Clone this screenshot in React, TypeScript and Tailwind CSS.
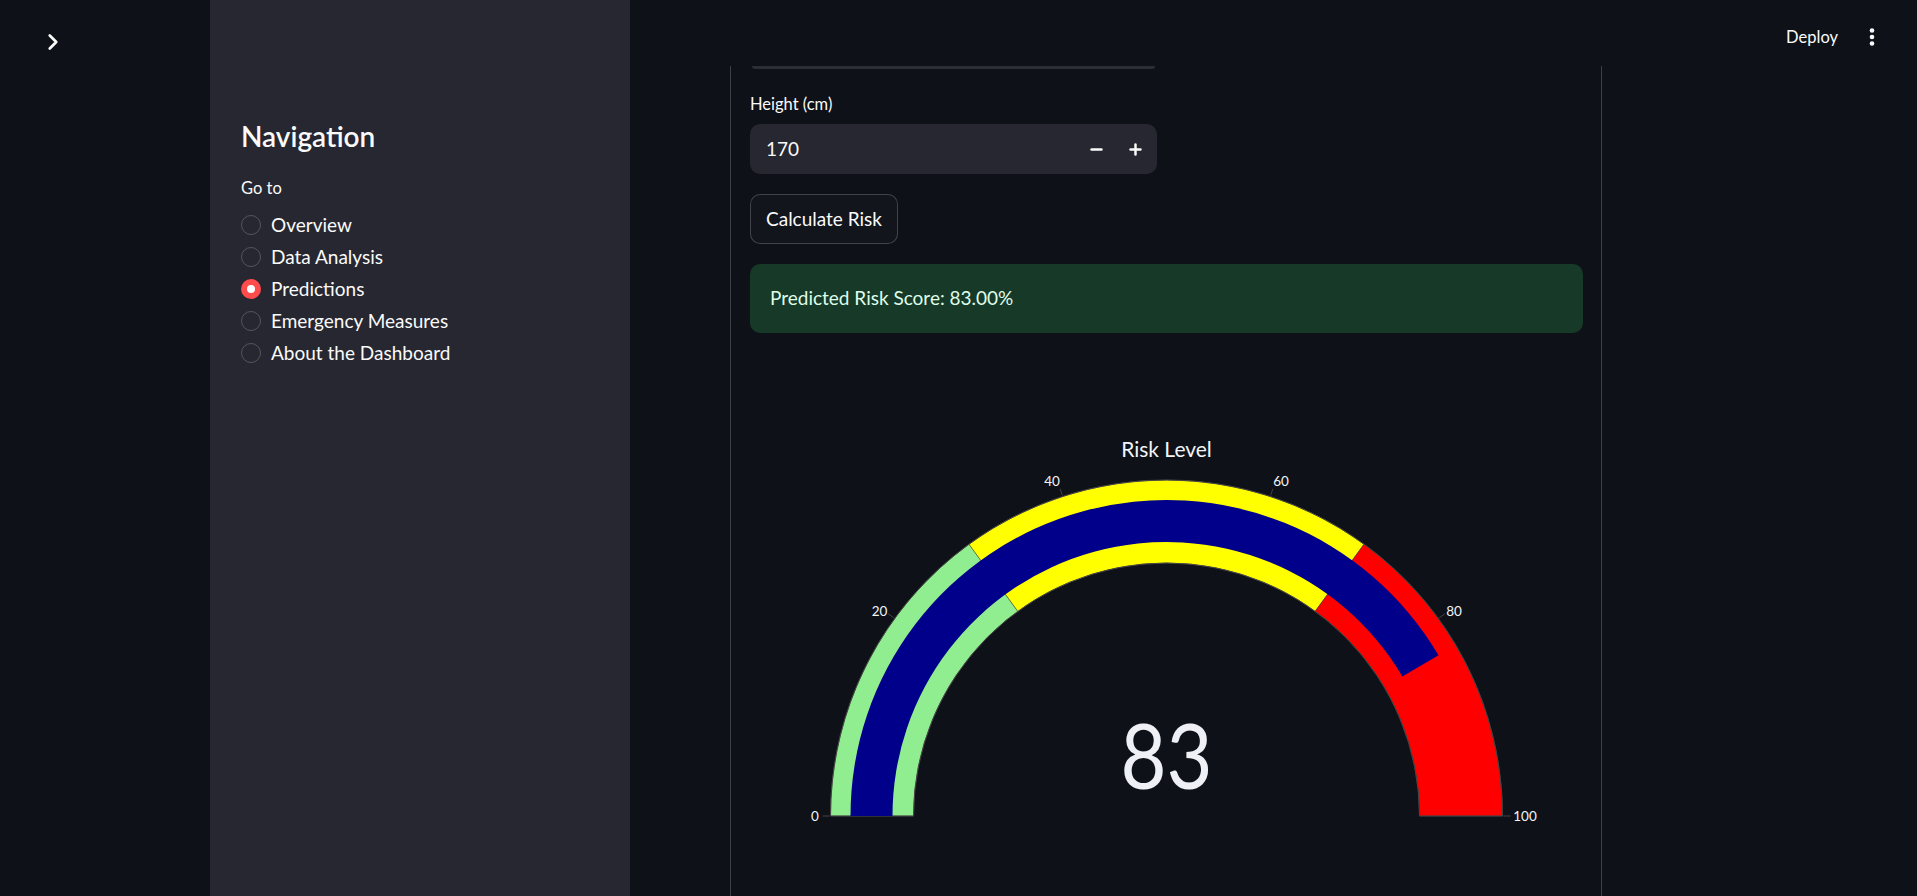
import React from "react";
import { ChevronRight, Minus, Plus } from "lucide-react";

const cx = 416.5;
const cy = 456;

function pt(r: number, deg: number): [number, number] {
  const a = (deg * Math.PI) / 180;
  return [cx + r * Math.cos(a), cy - r * Math.sin(a)];
}

function sector(r0: number, r1: number, a1: number, a2: number): string {
  const [x1, y1] = pt(r1, a1);
  const [x2, y2] = pt(r1, a2);
  const [x3, y3] = pt(r0, a2);
  const [x4, y4] = pt(r0, a1);
  return `M${x1} ${y1} A${r1} ${r1} 0 0 1 ${x2} ${y2} L${x3} ${y3} A${r0} ${r0} 0 0 0 ${x4} ${y4} Z`;
}

const v2a = (v: number) => 180 - v * 1.8;

const tickLabels: { v: number; x: number; y: number }[] = [
  { v: 0, x: 65, y: 456 },
  { v: 20, x: 129.5, y: 250.5 },
  { v: 40, x: 302, y: 120.5 },
  { v: 60, x: 531, y: 120.5 },
  { v: 80, x: 704, y: 250.5 },
  { v: 100, x: 775, y: 456 },
];

function Gauge() {
  return (
    <svg width={833} height={536} viewBox="0 0 833 536" className="block">
      <text
        x={cx}
        y={96.7}
        textAnchor="middle"
        fontSize={21}
        fill="#f2f5fa"
        fontFamily="Lato, sans-serif"
      >
        Risk Level
      </text>
      <path d={sector(253, 336, 180, v2a(30))} fill="#90ee90" stroke="#444" strokeWidth={0.5} />
      <path d={sector(253, 336, v2a(30), v2a(70))} fill="#ffff00" stroke="#444" strokeWidth={0.5} />
      <path d={sector(253, 336, v2a(70), 0)} fill="#ff0000" stroke="#444" strokeWidth={0.5} />
      <path d={sector(253, 336, 180, 0)} fill="none" stroke="#444" strokeWidth={1} />
      <path d={sector(274, 316, 180, v2a(83))} fill="#00008b" />
      {tickLabels.map((t) => {
        const [x1, y1] = pt(337, v2a(t.v));
        const [x2, y2] = pt(344, v2a(t.v));
        return (
          <g key={t.v}>
            <line x1={x1} y1={y1} x2={x2} y2={y2} stroke="#444" strokeWidth={1} />
            <text
              x={t.x}
              y={t.y}
              textAnchor="middle"
              dominantBaseline="central"
              fontSize={13.5}
              fill="#f2f5fa"
              fontFamily="Lato, sans-serif"
            >
              {t.v}
            </text>
          </g>
        );
      })}
      <text
        x={cx}
        y={429}
        textAnchor="middle"
        fontSize={92}
        fill="#eef0f6"
        fontFamily="Lato, sans-serif"
        textLength={92}
        lengthAdjust="spacingAndGlyphs"
      >
        83
      </text>
    </svg>
  );
}

function Radio({ label, checked }: { label: string; checked?: boolean }) {
  return (
    <div className="flex h-[32px] items-center">
      {checked ? (
        <div className="flex h-[20px] w-[20px] items-center justify-center rounded-full bg-[#ff4b4b]">
          <div className="h-[8px] w-[8px] rounded-full bg-white" />
        </div>
      ) : (
        <div className="h-[20px] w-[20px] rounded-full border border-[#54565e]" />
      )}
      <span className="ml-[10px] text-[19px] text-[#fafafa]">{label}</span>
    </div>
  );
}

export default function App() {
  return (
    <div className="flex h-[896px] w-[1917px] overflow-hidden bg-[#0e1117] font-['Lato',sans-serif] text-[#fafafa]">
      {/* left strip */}
      <div className="w-[210px] shrink-0 pl-[40px] pt-[29px]">
        <ChevronRight size={26} strokeWidth={2.5} color="#fafafa" />
      </div>

      {/* sidebar */}
      <div className="w-[420px] shrink-0 bg-[#262730] pl-[31px] pt-[118px]">
        <h2 className="h-[36px] text-[28px] font-semibold leading-[36px]">Navigation</h2>
        <div className="mt-[23px] h-[22px] text-[16.5px] leading-[22px]">Go to</div>
        <div className="mt-[10px] flex flex-col">
          <Radio label="Overview" />
          <Radio label="Data Analysis" />
          <Radio label="Predictions" checked />
          <Radio label="Emergency Measures" />
          <Radio label="About the Dashboard" />
        </div>
      </div>

      {/* main */}
      <div className="flex min-w-0 flex-1 flex-col">
        <div className="flex h-[66px] shrink-0 items-start justify-end pr-[42px] pt-[26px]">
          <span className="text-[16.5px] leading-[22px]">Deploy</span>
          <svg width={6} height={22} viewBox="0 0 6 22" className="ml-[31px]">
            <circle cx={3} cy={4.5} r={2.3} fill="#fafafa" />
            <circle cx={3} cy={11} r={2.3} fill="#fafafa" />
            <circle cx={3} cy={17.5} r={2.3} fill="#fafafa" />
          </svg>
        </div>

        <div className="ml-[100px] flex w-[872px] flex-1 flex-col border-x border-[rgba(250,250,250,0.2)] pl-[19px] pr-[17px]">
          <div className="ml-[2px] h-[3px] w-[403px] rounded-b-full bg-[#2c2e36]" />

          <div className="mt-[24px] h-[22px] text-[16.5px] leading-[22px]">Height (cm)</div>

          <div className="mt-[9px] flex h-[50px] w-[407px] items-center rounded-[10px] bg-[#262730] pr-[2px]">
            <span className="flex-1 pl-[16px] text-[19px]">170</span>
            <div className="flex h-full w-[39px] items-center justify-center">
              <Minus size={17} strokeWidth={3.5} color="#fafafa" />
            </div>
            <div className="flex h-full w-[39px] items-center justify-center">
              <Plus size={17} strokeWidth={3.5} color="#fafafa" />
            </div>
          </div>

          <div className="mt-[20px] flex">
            <div className="flex h-[50px] items-center rounded-[10px] border border-[rgba(250,250,250,0.2)] bg-[#12151c] px-[15px] text-[19px]">
              Calculate Risk
            </div>
          </div>

          <div className="mt-[20px] flex h-[69px] w-[833px] items-center rounded-[10px] bg-[#173928] pl-[20px] text-[19px] text-[#dffde9]">
            Predicted Risk Score: 83.00%
          </div>

          <div className="mt-[27px]">
            <Gauge />
          </div>
        </div>
      </div>
    </div>
  );
}
